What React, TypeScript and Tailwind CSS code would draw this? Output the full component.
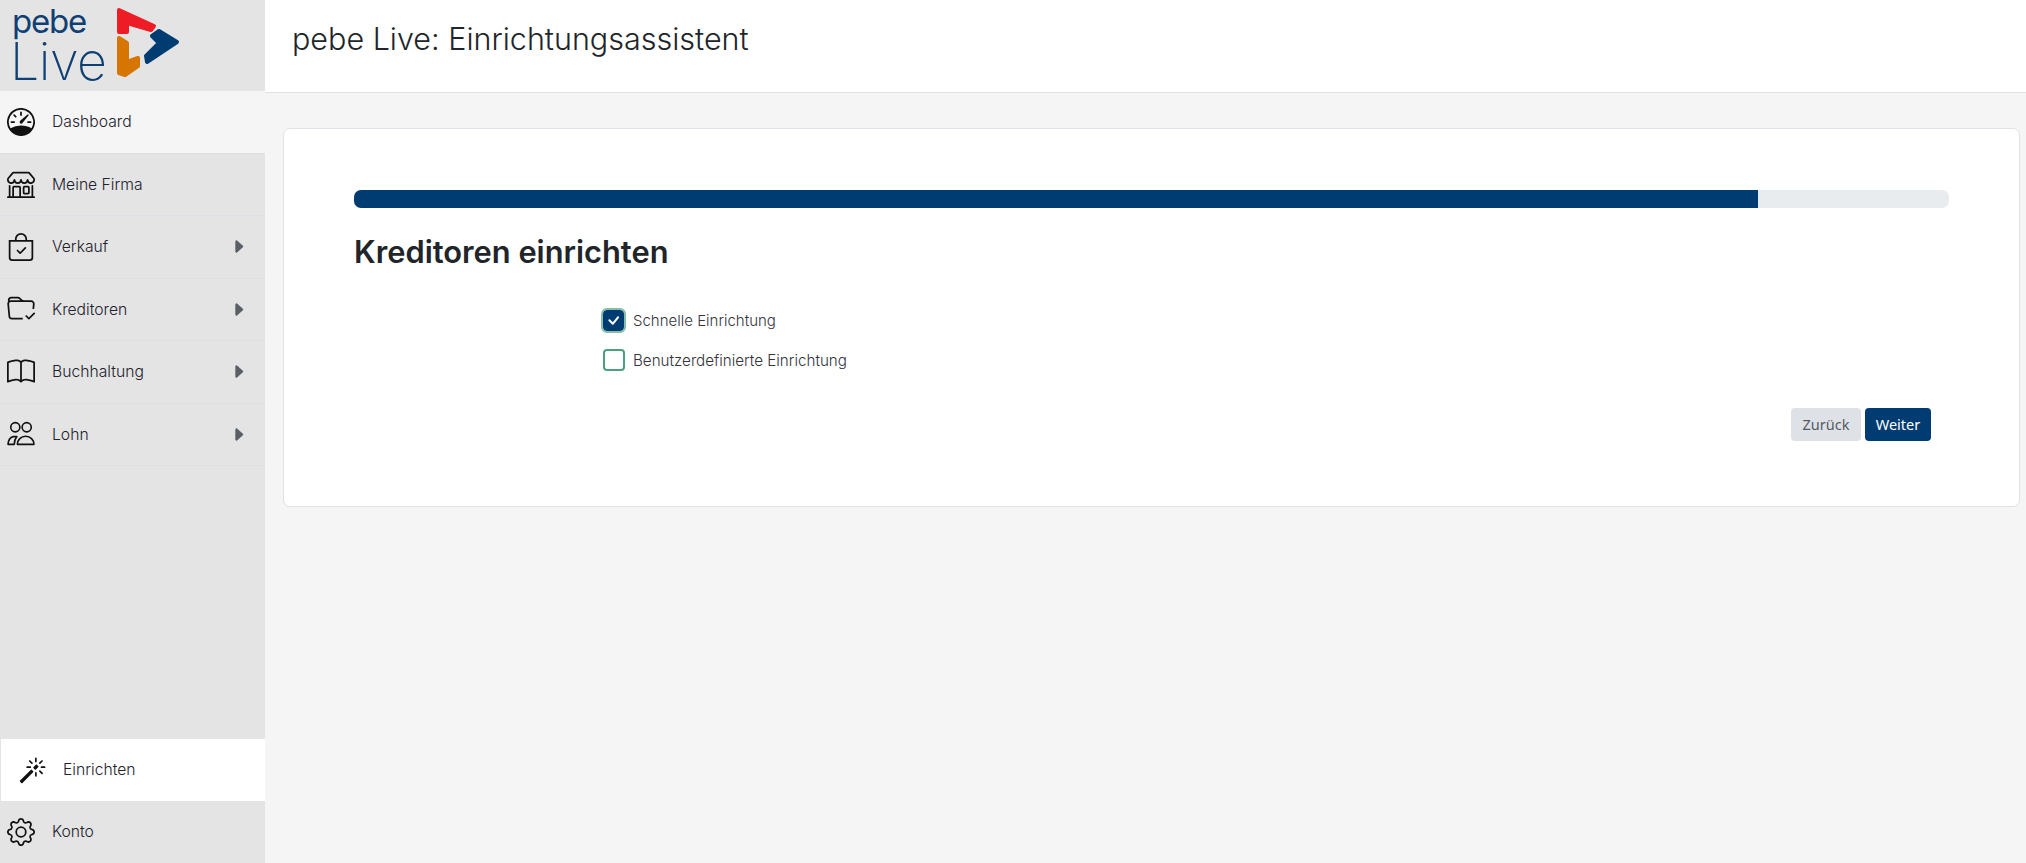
import type { ReactNode } from "react";
import {
  BsBagCheck,
  BsBook,
  BsCaretRightFill,
  BsCheck,
  BsFolderCheck,
  BsGear,
  BsMagic,
  BsShop,
  BsSpeedometer,
} from "react-icons/bs";

function PeopleIcon() {
  return (
    <svg width="28" height="28" viewBox="0 0 27 27" fill="none" stroke="currentColor" strokeWidth="1.6">
      <circle cx="8" cy="7" r="4.4" />
      <circle cx="19" cy="7" r="4.4" />
      <path d="M1 23.5c0-3.5 2-7 5-7.5h3.5c-1.6 2-2.5 4.5-2.5 7.5z" strokeLinejoin="round" />
      <path d="M10 23.5c0-4.5 3.5-7.8 8-7.8s8 3.3 8 7.8z" strokeLinejoin="round" />
    </svg>
  );
}

function NavItem({ icon, label, arrow, active }: { icon: ReactNode; label: string; arrow?: boolean; active?: boolean }) {
  return (
    <div
      className={`flex h-[62.5px] items-center border-b border-[#dfe0e6] pl-[7px] pr-[18px] ${active ? "bg-[#f5f5f5]" : ""}`}
    >
      <span className="flex w-[28px] justify-center text-[28px] text-[#111]">{icon}</span>
      <span className="ml-[17px] flex-1 pt-px text-[15.7px] font-light text-[#22222c]">{label}</span>
      {arrow && <BsCaretRightFill className="text-[17px] text-[#5a6066]" />}
    </div>
  );
}

function Logo() {
  return (
    <div className="flex h-[91px] shrink-0 items-start">
      <div className="ml-[12px] flex w-[100px] flex-col text-[#0f3f73]">
        <span className="mt-[6px] text-[33px] leading-[30px] tracking-[-1.2px]">pebe</span>
        <span className="mt-[7px] ml-[-2px] text-[52px] leading-[38px] font-extralight tracking-[-0.5px]">Live</span>
      </div>
      <svg className="shrink-0" width="72" height="80" viewBox="112 0 72 80" strokeLinejoin="round" strokeWidth="4">
        <polygon points="119,10 154,26 151,30 127,23 127,32 119,32" fill="#ee1c25" stroke="#ee1c25" />
        <polygon points="119,38 127,43 127,62 138,58 138,66 125,75 119,73" fill="#d67500" stroke="#d67500" />
        <polygon points="159,31 177,42 147,62 146,56 159,43 152,36" fill="#003c71" stroke="#003c71" />
      </svg>
    </div>
  );
}

export default function App() {
  return (
    <div className="flex h-[863px] overflow-hidden bg-[#f5f5f5] font-['Inter','Liberation_Sans',sans-serif] text-[#212529]">
      <aside className="flex w-[265px] shrink-0 flex-col bg-[#e4e4e4]">
        <Logo />
        <NavItem active icon={<BsSpeedometer />} label="Dashboard" />
        <NavItem icon={<BsShop />} label="Meine Firma" />
        <NavItem arrow icon={<BsBagCheck />} label="Verkauf" />
        <NavItem arrow icon={<BsFolderCheck />} label="Kreditoren" />
        <NavItem arrow icon={<BsBook />} label="Buchhaltung" />
        <NavItem arrow icon={<PeopleIcon />} label="Lohn" />
        <div className="mt-auto ml-px flex h-[62px] items-center bg-white pl-[18px]">
          <BsMagic className="text-[27px] text-[#111]" />
          <span className="ml-[17px] text-[15.7px] font-light text-[#22222c]">Einrichten</span>
        </div>
        <div className="flex h-[62px] items-center pl-[7px]">
          <span className="flex w-[28px] justify-center text-[28px] text-[#111]">
            <BsGear />
          </span>
          <span className="ml-[17px] text-[15.7px] font-light text-[#22222c]">Konto</span>
        </div>
      </aside>
      <main className="flex min-w-0 flex-1 flex-col">
        <header className="flex h-[93px] shrink-0 items-center border-b border-[#dee2e6] bg-white pb-[15px] pl-[27px]">
          <h1 className="text-[30.5px] font-light">pebe Live: Einrichtungsassistent</h1>
        </header>
        <div className="pt-[35px] pr-[6px] pl-[18px]">
          <section className="h-[379px] rounded-[7px] border border-[#dfe2e6] bg-white px-[70px] pt-[61px]">
            <div className="h-[18px] overflow-hidden rounded-[7px] bg-[#e9ecef]">
              <div className="h-full w-[88%] bg-[#003c71]" />
            </div>
            <h2 className="mt-[26px] text-[30.8px] leading-[36px] font-semibold">Kreditoren einrichten</h2>
            <div className="mt-[38px] ml-[249px] flex flex-col gap-[16px]">
              <label className="flex h-[24px] items-center">
                <span className="flex h-[21px] w-[21px] items-center justify-center rounded-[4px] bg-[#003c71] text-[23px] text-white outline-2 outline-[#86bda6]">
                  <BsCheck />
                </span>
                <span className="ml-[9px] pt-[2px] text-[15px] font-light text-[#33333c]">Schnelle Einrichtung</span>
              </label>
              <label className="flex h-[24px] items-center">
                <span className="h-[22px] w-[22px] rounded-[4px] border-2 border-[#4c9f7f]" />
                <span className="ml-[8px] pt-[2px] text-[15.2px] font-light text-[#33333c]">Benutzerdefinierte Einrichtung</span>
              </label>
            </div>
            <div className="mt-[36px] mr-[18px] flex justify-end gap-1">
              <button className="h-[33px] w-[70px] rounded-[4px] bg-[#dee2e6] font-['Noto_Sans',sans-serif] text-[14.5px] text-[#555b62]">Zurück</button>
              <button className="h-[33px] w-[66px] rounded-[4px] bg-[#003c71] font-['Noto_Sans',sans-serif] text-[14.5px] text-white">Weiter</button>
            </div>
          </section>
        </div>
      </main>
    </div>
  );
}
